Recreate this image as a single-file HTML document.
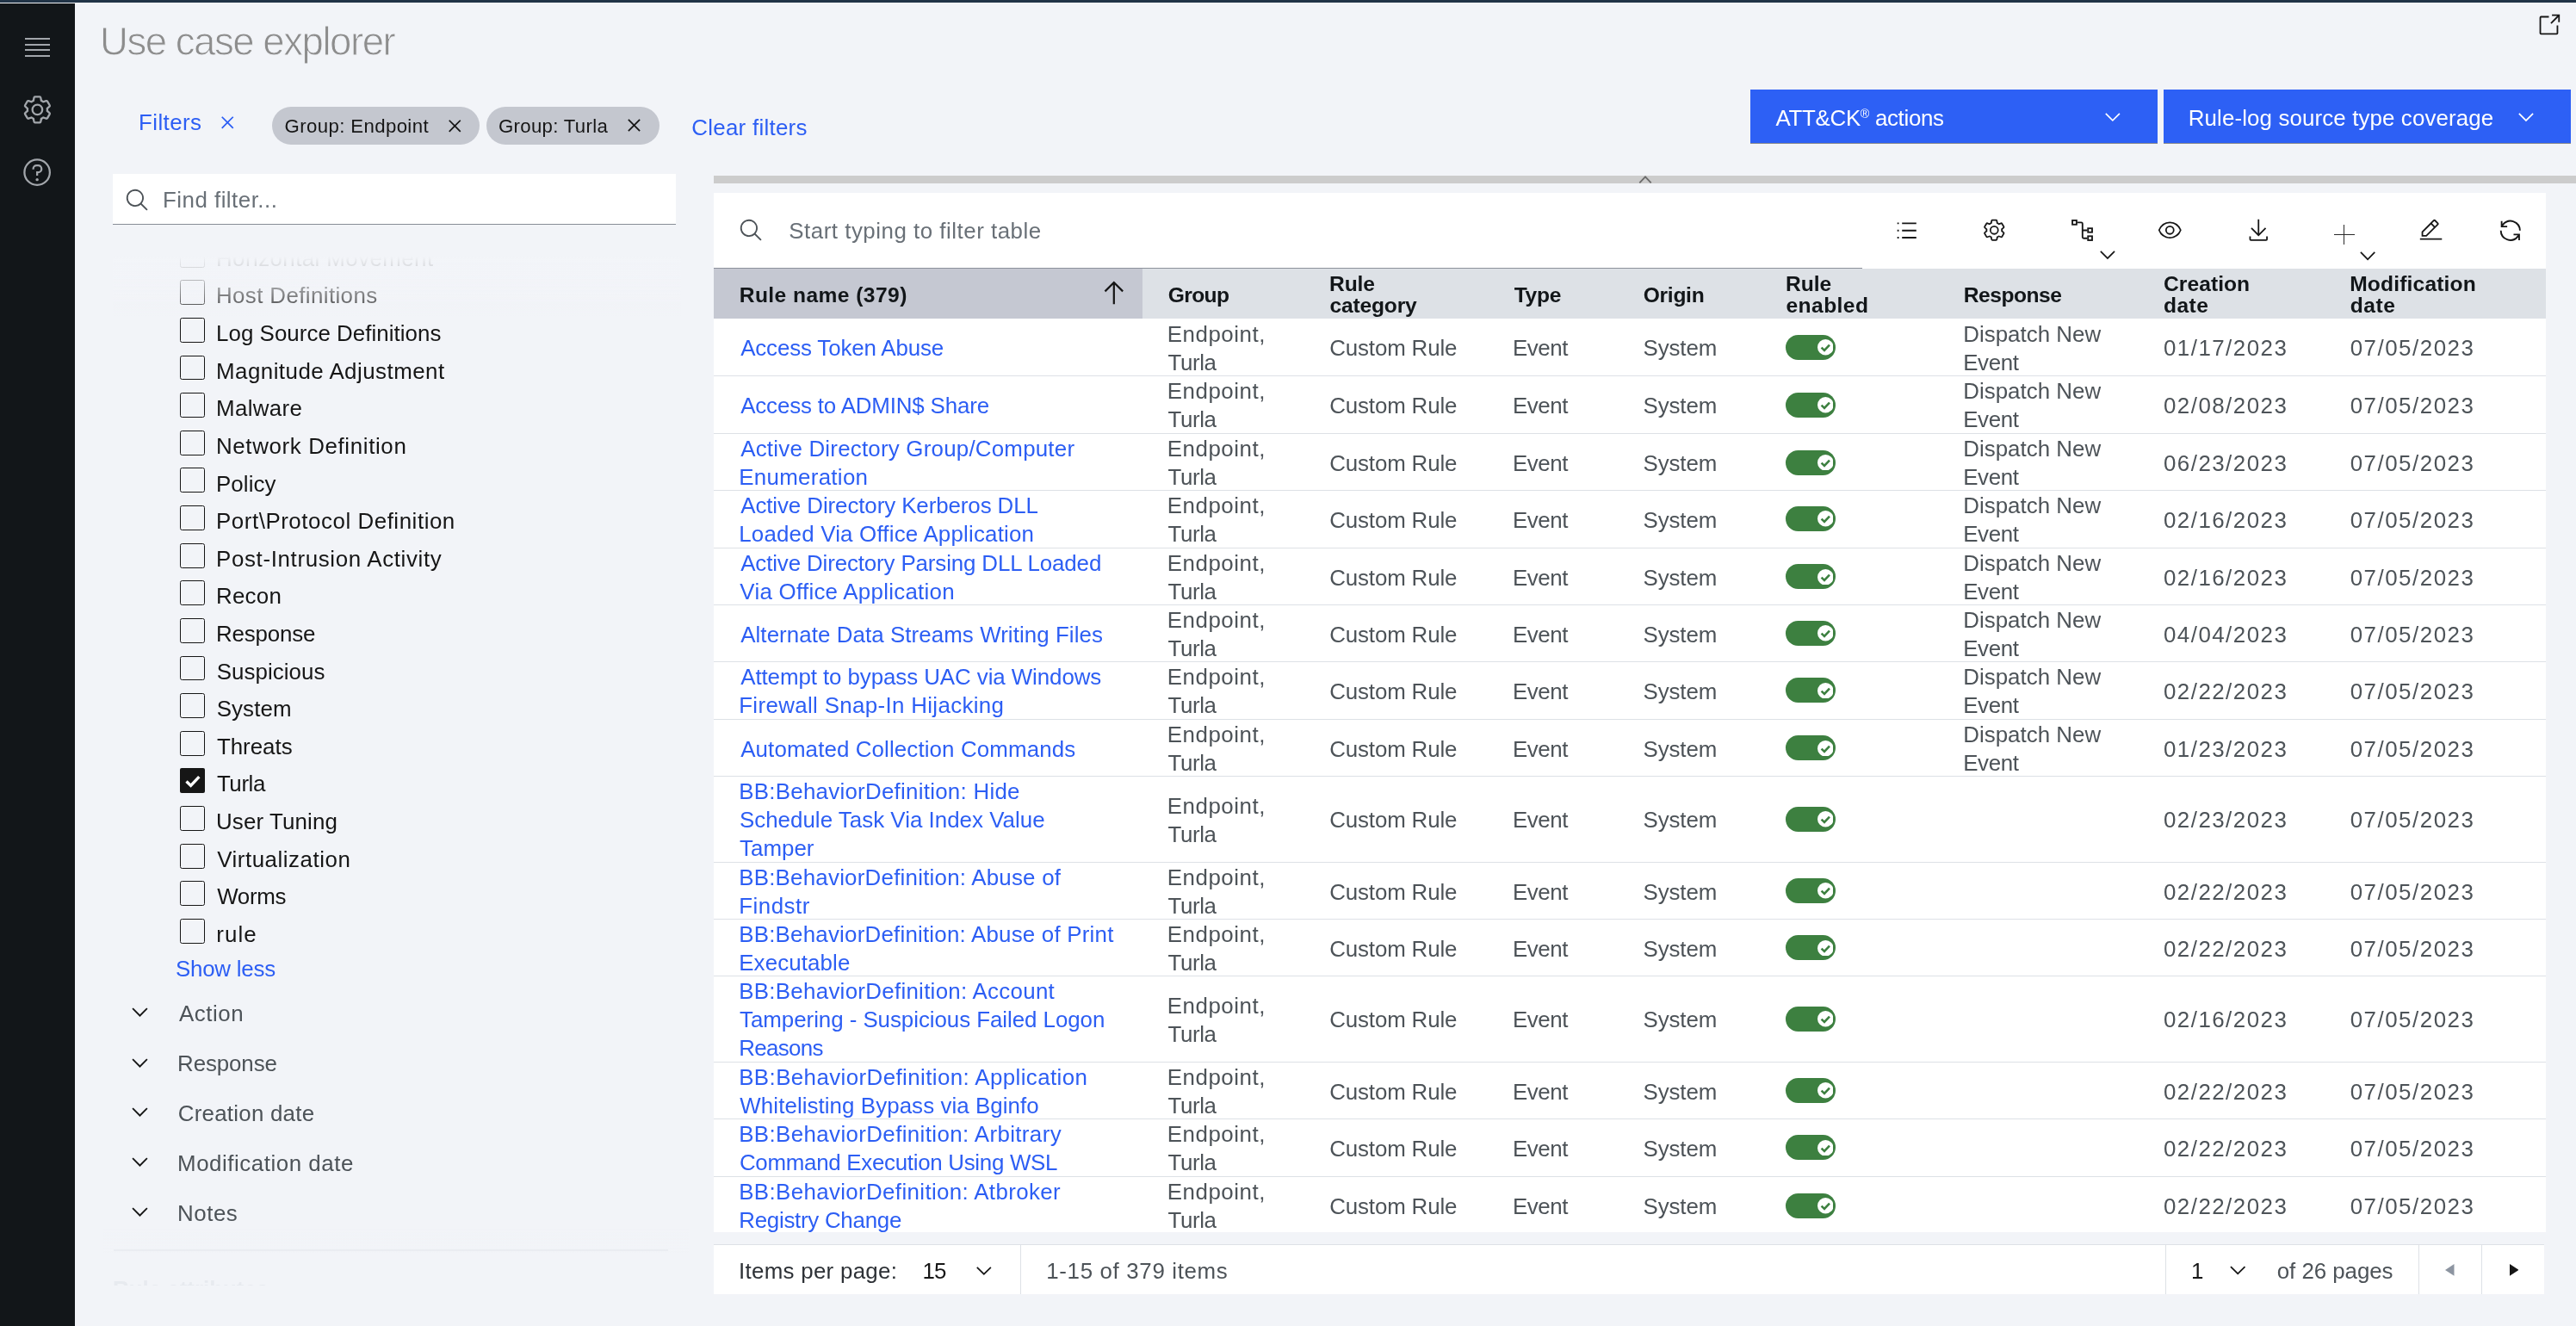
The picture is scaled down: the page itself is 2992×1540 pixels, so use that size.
<!DOCTYPE html>
<html lang="en"><head><meta charset="utf-8"><title>Use case explorer</title>
<style>
html,body{margin:0;padding:0}
body{width:2992px;height:1540px;overflow:hidden;background:#f2f4f8;font-family:"Liberation Sans", sans-serif;position:relative}
.b{position:absolute;display:block}
.t{position:absolute;white-space:nowrap;margin:0;padding:0}
.ln{display:inline-block}
@media (max-width:1600px){body{width:1496px;height:770px}#app{zoom:.5}}
</style></head><body><div id="app" style="position:absolute;left:0;top:0;width:2992px;height:1540px;will-change:transform">
<div class="b" style="left:0.00px;top:0.00px;width:2992.00px;height:3.00px;background:#213447;"></div>
<div class="b" style="left:0.00px;top:4.20px;width:86.80px;height:1540.00px;background:#121619;"></div>
<div class="b" style="left:28.80px;top:44.00px;width:29.30px;height:2.00px;background:#a2a6ab;"></div>
<div class="b" style="left:28.80px;top:50.60px;width:29.30px;height:2.00px;background:#a2a6ab;"></div>
<div class="b" style="left:28.80px;top:57.30px;width:29.30px;height:2.00px;background:#a2a6ab;"></div>
<div class="b" style="left:28.80px;top:64.00px;width:29.30px;height:2.00px;background:#a2a6ab;"></div>
<svg class="b" style="left:24.94px;top:108.79px;" width="36.81" height="36.81" viewBox="0 0 32 32" fill="#a2a6ab"><path d="M27,16.76c0-.25,0-.5,0-.76s0-.51,0-.77l1.92-1.68A2,2,0,0,0,29.3,11L26.94,7a2,2,0,0,0-1.73-1,2,2,0,0,0-.64.1l-2.43.82a11.35,11.35,0,0,0-1.31-.75l-.51-2.52a2,2,0,0,0-2-1.61H13.64a2,2,0,0,0-2,1.61l-.51,2.52a11.48,11.48,0,0,0-1.32.75L7.43,6.06A2,2,0,0,0,6.79,6,2,2,0,0,0,5.06,7L2.7,11a2,2,0,0,0,.41,2.51L5,15.24c0,.25,0,.5,0,.76s0,.51,0,.77L3.11,18.45A2,2,0,0,0,2.7,21L5.06,25a2,2,0,0,0,1.73,1,2,2,0,0,0,.64-.1l2.43-.82a11.35,11.35,0,0,0,1.31.75l.51,2.52a2,2,0,0,0,2,1.61h4.72a2,2,0,0,0,2-1.61l.51-2.52a11.48,11.48,0,0,0,1.32-.75l2.42.82a2,2,0,0,0,.64.1,2,2,0,0,0,1.73-1L29.3,21a2,2,0,0,0-.41-2.51ZM25.21,24l-3.43-1.16a8.86,8.86,0,0,1-2.71,1.57L18.36,28H13.64l-.71-3.55a9.36,9.36,0,0,1-2.7-1.57L6.79,24,4.43,20l2.72-2.4a8.9,8.9,0,0,1,0-3.13L4.43,12,6.79,8l3.43,1.16a8.86,8.86,0,0,1,2.71-1.57L13.64,4h4.72l.71,3.55a9.36,9.36,0,0,1,2.7,1.57L25.21,8,27.57,12l-2.72,2.4a8.9,8.9,0,0,1,0,3.13L27.57,20Z"/><path d="M16,22a6,6,0,1,1,6-6A5.94,5.94,0,0,1,16,22Zm0-10a3.91,3.91,0,0,0-4,4,3.91,3.91,0,0,0,4,4,3.91,3.91,0,0,0,4-4A3.91,3.91,0,0,0,16,12Z"/></svg>
<svg class="b" style="left:24.86px;top:181.61px;" width="36.29" height="36.29" viewBox="0 0 32 32" fill="#a2a6ab"><path d="M16,2A14,14,0,1,0,30,16,14,14,0,0,0,16,2Zm0,26A12,12,0,1,1,28,16,12,12,0,0,1,16,28Z"/><circle cx="16" cy="23.5" r="1.5"/><path d="M17,8H15.5A4.49,4.49,0,0,0,11,12.5V13h2v-.5A2.5,2.5,0,0,1,15.5,10H17a2.5,2.5,0,0,1,0,5H15v4.5h2V17a4.5,4.5,0,0,0,0-9Z"/></svg>
<div class="t title" style="left:120.00px;top:22.00px;font-size:45.6px;line-height:54.72px;color:#8d8d8d;-webkit-text-stroke:0.9px #f2f4f8;"><span class="ln title_0" style="letter-spacing:-1.484px;margin-left:-4.00px;">Use case explorer</span></div>
<svg class="b" style="left:2946.40px;top:15.16px;" width="28.98" height="28.98" viewBox="0 0 32 32" fill="#161616"><path d="M26,28H6a2.0027,2.0027,0,0,1-2-2V6A2.0027,2.0027,0,0,1,6,4H16V6H6V26H26V16h2V26A2.0027,2.0027,0,0,1,26,28Z"/><path d="M20 2L20 4 26.586 4 18 12.586 19.414 14 28 5.414 28 12 30 12 30 2 20 2z"/></svg>
<div class="t filters" style="left:163.00px;top:127.00px;font-size:25.9px;line-height:31.08px;color:#2c5ef4;"><span class="ln filters_0" style="letter-spacing:0.417px;margin-left:-2.00px;">Filters</span></div>
<svg class="b" style="left:250.00px;top:127.75px;" width="28.5" height="28.5" viewBox="0 0 32 32" fill="#2c5ef4"><path d="M24 9.4L22.6 8 16 14.6 9.4 8 8 9.4 14.6 16 8 22.6 9.4 24 16 17.4 22.6 24 24 22.6 17.4 16 24 9.4z"/></svg>
<div class="b" style="left:315.50px;top:123.60px;width:241.20px;height:44.10px;background:#c4c7cf;border-radius:22.1px;"></div>
<div class="t chip1" style="left:331.50px;top:134.00px;font-size:22.2px;line-height:26.64px;color:#161616;"><span class="ln chip1_0" style="letter-spacing:0.393px;margin-left:-1.00px;">Group: Endpoint</span></div>
<svg class="b" style="left:514.45px;top:131.50px;" width="28.5" height="28.5" viewBox="0 0 32 32" fill="#161616"><path d="M24 9.4L22.6 8 16 14.6 9.4 8 8 9.4 14.6 16 8 22.6 9.4 24 16 17.4 22.6 24 24 22.6 17.4 16 24 9.4z"/></svg>
<div class="b" style="left:564.70px;top:123.60px;width:201.30px;height:44.10px;background:#c4c7cf;border-radius:22.1px;"></div>
<div class="t chip2" style="left:580.00px;top:134.00px;font-size:22.2px;line-height:26.64px;color:#161616;"><span class="ln chip2_0" style="letter-spacing:0.318px;margin-left:-1.00px;">Group: Turla</span></div>
<svg class="b" style="left:722.25px;top:131.25px;" width="29.0" height="29.0" viewBox="0 0 32 32" fill="#161616"><path d="M24 9.4L22.6 8 16 14.6 9.4 8 8 9.4 14.6 16 8 22.6 9.4 24 16 17.4 22.6 24 24 22.6 17.4 16 24 9.4z"/></svg>
<div class="t clear" style="left:804.50px;top:133.00px;font-size:25.9px;line-height:31.08px;color:#2c5ef4;"><span class="ln clear_0" style="letter-spacing:0.271px;margin-left:-1.25px;">Clear filters</span></div>
<div class="b" style="left:2032.90px;top:104.10px;width:473.00px;height:61.90px;background:#2d60f5;"></div>
<div class="b" style="left:2032.90px;top:166.00px;width:473.00px;height:1.00px;background:#84868b;"></div>
<div class="b" style="left:2512.90px;top:104.10px;width:473.10px;height:61.90px;background:#2d60f5;"></div>
<div class="b" style="left:2512.90px;top:166.00px;width:473.10px;height:1.00px;background:#84868b;"></div>
<div class="t btn1" style="left:2062.60px;top:122.00px;font-size:25.9px;line-height:31.08px;color:#fff;"><span class="ln btn1_0" style="letter-spacing:-0.321px;margin-left:-0.05px;">ATT&amp;CK<span style="font-size:0.55em;position:relative;top:-0.62em;">®</span> actions</span></div>
<svg class="b" style="left:2439.63px;top:121.62px;" width="27.73" height="27.73" viewBox="0 0 32 32" fill="#fff"><path d="M16 22L6 12 7.4 10.6 16 19.2 24.6 10.6 26 12z"/></svg>
<div class="t btn2" style="left:2543.80px;top:122.00px;font-size:25.9px;line-height:31.08px;color:#fff;"><span class="ln btn2_0" style="letter-spacing:0.120px;margin-left:-2.10px;">Rule-log source type coverage</span></div>
<svg class="b" style="left:2920.47px;top:121.96px;" width="27.95" height="27.95" viewBox="0 0 32 32" fill="#fff"><path d="M16 22L6 12 7.4 10.6 16 19.2 24.6 10.6 26 12z"/></svg>
<div class="b" style="left:131.00px;top:201.80px;width:654.00px;height:58.20px;background:#fff;"></div>
<div class="b" style="left:131.00px;top:259.50px;width:654.00px;height:1.60px;background:#878d96;"></div>
<svg class="b" style="left:145.29px;top:217.54px;" width="29.33" height="29.33" viewBox="0 0 32 32" fill="#4d5358"><path d="M29,27.586l-7.552-7.552a11.018,11.018,0,1,0-1.414,1.414L27.586,29ZM4,13a9,9,0,1,1,9,9A9.01,9.01,0,0,1,4,13Z"/></svg>
<div class="t find" style="left:191.00px;top:217.00px;font-size:25.9px;line-height:31.08px;color:#697077;"><span class="ln find_0" style="letter-spacing:0.481px;margin-left:-2.00px;">Find filter...</span></div>
<div class="b" style="left:209.10px;top:281.74px;width:28.90px;height:28.90px;background:transparent;box-sizing:border-box;border:1.6px solid #161616;border-radius:2.5px;"></div>
<div class="t flt" style="left:253.10px;top:285.00px;font-size:25.9px;line-height:31.08px;color:#161616;"><span class="ln f0_0" style="letter-spacing:0.417px;margin-left:-2.10px;">Horizontal Movement</span></div>
<div class="b" style="left:209.10px;top:325.36px;width:28.90px;height:28.90px;background:transparent;box-sizing:border-box;border:1.6px solid #161616;border-radius:2.5px;"></div>
<div class="t flt" style="left:253.10px;top:328.00px;font-size:25.9px;line-height:31.08px;color:#161616;"><span class="ln f1_0" style="letter-spacing:0.387px;margin-left:-2.10px;">Host Definitions</span></div>
<div class="b" style="left:209.10px;top:368.98px;width:28.90px;height:28.90px;background:transparent;box-sizing:border-box;border:1.6px solid #161616;border-radius:2.5px;"></div>
<div class="t flt" style="left:253.10px;top:372.00px;font-size:25.9px;line-height:31.08px;color:#161616;"><span class="ln f2_0" style="letter-spacing:0.045px;margin-left:-2.10px;">Log Source Definitions</span></div>
<div class="b" style="left:209.10px;top:412.60px;width:28.90px;height:28.90px;background:transparent;box-sizing:border-box;border:1.6px solid #161616;border-radius:2.5px;"></div>
<div class="t flt" style="left:253.10px;top:416.00px;font-size:25.9px;line-height:31.08px;color:#161616;"><span class="ln f3_0" style="letter-spacing:0.471px;margin-left:-2.10px;">Magnitude Adjustment</span></div>
<div class="b" style="left:209.10px;top:456.22px;width:28.90px;height:28.90px;background:transparent;box-sizing:border-box;border:1.6px solid #161616;border-radius:2.5px;"></div>
<div class="t flt" style="left:253.10px;top:459.00px;font-size:25.9px;line-height:31.08px;color:#161616;"><span class="ln f4_0" style="letter-spacing:0.342px;margin-left:-2.10px;">Malware</span></div>
<div class="b" style="left:209.10px;top:499.84px;width:28.90px;height:28.90px;background:transparent;box-sizing:border-box;border:1.6px solid #161616;border-radius:2.5px;"></div>
<div class="t flt" style="left:253.10px;top:503.00px;font-size:25.9px;line-height:31.08px;color:#161616;"><span class="ln f5_0" style="letter-spacing:0.629px;margin-left:-2.10px;">Network Definition</span></div>
<div class="b" style="left:209.10px;top:543.46px;width:28.90px;height:28.90px;background:transparent;box-sizing:border-box;border:1.6px solid #161616;border-radius:2.5px;"></div>
<div class="t flt" style="left:253.10px;top:547.00px;font-size:25.9px;line-height:31.08px;color:#161616;"><span class="ln f6_0" style="letter-spacing:0.070px;margin-left:-2.10px;">Policy</span></div>
<div class="b" style="left:209.10px;top:587.08px;width:28.90px;height:28.90px;background:transparent;box-sizing:border-box;border:1.6px solid #161616;border-radius:2.5px;"></div>
<div class="t flt" style="left:253.10px;top:590.00px;font-size:25.9px;line-height:31.08px;color:#161616;"><span class="ln f7_0" style="letter-spacing:0.543px;margin-left:-2.10px;">Port\Protocol Definition</span></div>
<div class="b" style="left:209.10px;top:630.70px;width:28.90px;height:28.90px;background:transparent;box-sizing:border-box;border:1.6px solid #161616;border-radius:2.5px;"></div>
<div class="t flt" style="left:253.10px;top:634.00px;font-size:25.9px;line-height:31.08px;color:#161616;"><span class="ln f8_0" style="letter-spacing:0.648px;margin-left:-2.10px;">Post-Intrusion Activity</span></div>
<div class="b" style="left:209.10px;top:674.32px;width:28.90px;height:28.90px;background:transparent;box-sizing:border-box;border:1.6px solid #161616;border-radius:2.5px;"></div>
<div class="t flt" style="left:253.10px;top:677.00px;font-size:25.9px;line-height:31.08px;color:#161616;"><span class="ln f9_0" style="letter-spacing:0.250px;margin-left:-2.10px;">Recon</span></div>
<div class="b" style="left:209.10px;top:717.94px;width:28.90px;height:28.90px;background:transparent;box-sizing:border-box;border:1.6px solid #161616;border-radius:2.5px;"></div>
<div class="t flt" style="left:253.10px;top:721.00px;font-size:25.9px;line-height:31.08px;color:#161616;"><span class="ln f10_0" style="letter-spacing:-0.171px;margin-left:-2.10px;">Response</span></div>
<div class="b" style="left:209.10px;top:761.56px;width:28.90px;height:28.90px;background:transparent;box-sizing:border-box;border:1.6px solid #161616;border-radius:2.5px;"></div>
<div class="t flt" style="left:253.10px;top:765.00px;font-size:25.9px;line-height:31.08px;color:#161616;"><span class="ln f11_0" style="letter-spacing:0.050px;margin-left:-1.35px;">Suspicious</span></div>
<div class="b" style="left:209.10px;top:805.18px;width:28.90px;height:28.90px;background:transparent;box-sizing:border-box;border:1.6px solid #161616;border-radius:2.5px;"></div>
<div class="t flt" style="left:253.10px;top:808.00px;font-size:25.9px;line-height:31.08px;color:#161616;"><span class="ln f12_0" style="letter-spacing:0.080px;margin-left:-1.35px;">System</span></div>
<div class="b" style="left:209.10px;top:848.80px;width:28.90px;height:28.90px;background:transparent;box-sizing:border-box;border:1.6px solid #161616;border-radius:2.5px;"></div>
<div class="t flt" style="left:253.10px;top:852.00px;font-size:25.9px;line-height:31.08px;color:#161616;"><span class="ln f13_0" style="letter-spacing:-0.008px;margin-left:-1.20px;">Threats</span></div>
<div class="b" style="left:209.10px;top:892.42px;width:28.90px;height:28.90px;background:#161616;border-radius:2px;"></div>
<svg class="b" style="left:214.50px;top:899.62px" width="18" height="15" viewBox="0 0 18 15" fill="none" stroke="#fff" stroke-width="3.4"><path d="M1.5 7.5L6.6 12.4L16.3 2.2"/></svg>
<div class="t flt" style="left:253.10px;top:895.00px;font-size:25.9px;line-height:31.08px;color:#161616;"><span class="ln f14_0" style="letter-spacing:-0.388px;margin-left:-1.20px;">Turla</span></div>
<div class="b" style="left:209.10px;top:936.04px;width:28.90px;height:28.90px;background:transparent;box-sizing:border-box;border:1.6px solid #161616;border-radius:2.5px;"></div>
<div class="t flt" style="left:253.10px;top:939.00px;font-size:25.9px;line-height:31.08px;color:#161616;"><span class="ln f15_0" style="letter-spacing:0.125px;margin-left:-2.10px;">User Tuning</span></div>
<div class="b" style="left:209.10px;top:979.66px;width:28.90px;height:28.90px;background:transparent;box-sizing:border-box;border:1.6px solid #161616;border-radius:2.5px;"></div>
<div class="t flt" style="left:253.10px;top:983.00px;font-size:25.9px;line-height:31.08px;color:#161616;"><span class="ln f16_0" style="letter-spacing:0.531px;margin-left:-0.95px;">Virtualization</span></div>
<div class="b" style="left:209.10px;top:1023.28px;width:28.90px;height:28.90px;background:transparent;box-sizing:border-box;border:1.6px solid #161616;border-radius:2.5px;"></div>
<div class="t flt" style="left:253.10px;top:1026.00px;font-size:25.9px;line-height:31.08px;color:#161616;"><span class="ln f17_0" style="letter-spacing:-0.275px;margin-left:-0.95px;">Worms</span></div>
<div class="b" style="left:209.10px;top:1066.90px;width:28.90px;height:28.90px;background:transparent;box-sizing:border-box;border:1.6px solid #161616;border-radius:2.5px;"></div>
<div class="t flt" style="left:253.10px;top:1070.00px;font-size:25.9px;line-height:31.08px;color:#161616;"><span class="ln f18_0" style="letter-spacing:1.067px;margin-left:-1.85px;">rule</span></div>
<div class="b" style="left:131.00px;top:261.20px;width:660.00px;height:36.80px;background:#f2f4f8;"></div>
<div class="b" style="left:131.00px;top:298.00px;width:660.00px;height:72.00px;background:transparent;background:linear-gradient(to bottom,#f2f4f8 0%,rgba(242,244,248,0.72) 40%,rgba(242,244,248,0.35) 75%,rgba(242,244,248,0) 100%);"></div>
<div class="t showless" style="left:205.30px;top:1110.00px;font-size:25.9px;line-height:31.08px;color:#2c5ef4;"><span class="ln showless_0" style="letter-spacing:-0.219px;margin-left:-1.35px;">Show less</span></div>
<svg class="b" style="left:148.12px;top:1161.15px;" width="28.96" height="28.96" viewBox="0 0 32 32" fill="#161616"><path d="M16 22L6 12 7.4 10.6 16 19.2 24.6 10.6 26 12z"/></svg>
<div class="t acc" style="left:208.20px;top:1162.00px;font-size:25.9px;line-height:31.08px;color:#4d5358;"><span class="ln a0_0" style="letter-spacing:0.520px;margin-left:-0.15px;">Action</span></div>
<svg class="b" style="left:148.12px;top:1219.55px;" width="28.96" height="28.96" viewBox="0 0 32 32" fill="#161616"><path d="M16 22L6 12 7.4 10.6 16 19.2 24.6 10.6 26 12z"/></svg>
<div class="t acc" style="left:208.20px;top:1220.00px;font-size:25.9px;line-height:31.08px;color:#4d5358;"><span class="ln a1_0" style="letter-spacing:-0.107px;margin-left:-2.15px;">Response</span></div>
<svg class="b" style="left:148.12px;top:1277.35px;" width="28.96" height="28.96" viewBox="0 0 32 32" fill="#161616"><path d="M16 22L6 12 7.4 10.6 16 19.2 24.6 10.6 26 12z"/></svg>
<div class="t acc" style="left:208.20px;top:1278.00px;font-size:25.9px;line-height:31.08px;color:#4d5358;"><span class="ln a2_0" style="letter-spacing:0.237px;margin-left:-1.40px;">Creation date</span></div>
<svg class="b" style="left:148.12px;top:1335.35px;" width="28.96" height="28.96" viewBox="0 0 32 32" fill="#161616"><path d="M16 22L6 12 7.4 10.6 16 19.2 24.6 10.6 26 12z"/></svg>
<div class="t acc" style="left:208.20px;top:1336.00px;font-size:25.9px;line-height:31.08px;color:#4d5358;"><span class="ln a3_0" style="letter-spacing:0.531px;margin-left:-2.15px;">Modification date</span></div>
<svg class="b" style="left:148.12px;top:1393.15px;" width="28.96" height="28.96" viewBox="0 0 32 32" fill="#161616"><path d="M16 22L6 12 7.4 10.6 16 19.2 24.6 10.6 26 12z"/></svg>
<div class="t acc" style="left:208.20px;top:1394.00px;font-size:25.9px;line-height:31.08px;color:#4d5358;"><span class="ln a4_0" style="letter-spacing:0.525px;margin-left:-2.15px;">Notes</span></div>
<div class="b" style="left:131.50px;top:1451.40px;width:644.00px;height:1.40px;background:#e3e6ec;"></div>
<div class="b" style="left:131px;top:1470px;width:400px;height:23.4px;overflow:hidden;"><div class="t" style="left:0;top:12.3px;font-size:25.9px;line-height:31px;font-weight:700;color:#e7eaef;">Rule attributes</div></div>
<div class="b" style="left:120.00px;top:1425.00px;width:680.00px;height:30.00px;background:transparent;background:linear-gradient(to bottom,rgba(242,244,248,0),rgba(242,244,248,0.5));"></div>
<div class="b" style="left:829.00px;top:203.90px;width:2163.00px;height:8.90px;background:#cccccc;"></div>
<svg class="b" style="left:1900px;top:203.9px" width="22" height="8.9" viewBox="1900 203.9 22 8.9" fill="none" stroke="#6b6b6b" stroke-width="1.8"><path d="M1904.3 212.3L1911 205.2L1917.7 212.3"/></svg>
<div class="b" style="left:829.00px;top:224.00px;width:2127.80px;height:1206.80px;background:#fff;"></div>
<svg class="b" style="left:857.79px;top:253.04px;" width="29.33" height="29.33" viewBox="0 0 32 32" fill="#4d5358"><path d="M29,27.586l-7.552-7.552a11.018,11.018,0,1,0-1.414,1.414L27.586,29ZM4,13a9,9,0,1,1,9,9A9.01,9.01,0,0,1,4,13Z"/></svg>
<div class="t tsearch" style="left:917.50px;top:253.00px;font-size:25.9px;line-height:31.08px;color:#697077;"><span class="ln tsearch_0" style="letter-spacing:0.509px;margin-left:-1.25px;">Start typing to filter table</span></div>
<div class="b" style="left:829.00px;top:310.60px;width:1334.00px;height:1.50px;background:#8d919b;"></div>
<svg class="b" style="left:2200.27px;top:252.52px;" width="29.47" height="29.47" viewBox="0 0 32 32" fill="#161616"><path d="M10 6H28V8H10zM10 24H28V26H10zM10 15H28V17H10zM4 15H6V17H4zM4 6H6V8H4zM4 24H6V26H4z"/></svg>
<svg class="b" style="left:2301.60px;top:252.72px;" width="28.55" height="28.55" viewBox="0 0 32 32" fill="#161616"><path d="M27,16.76c0-.25,0-.5,0-.76s0-.51,0-.77l1.92-1.68A2,2,0,0,0,29.3,11L26.94,7a2,2,0,0,0-1.73-1,2,2,0,0,0-.64.1l-2.43.82a11.35,11.35,0,0,0-1.31-.75l-.51-2.52a2,2,0,0,0-2-1.61H13.64a2,2,0,0,0-2,1.61l-.51,2.52a11.48,11.48,0,0,0-1.32.75L7.43,6.06A2,2,0,0,0,6.79,6,2,2,0,0,0,5.06,7L2.7,11a2,2,0,0,0,.41,2.51L5,15.24c0,.25,0,.5,0,.76s0,.51,0,.77L3.11,18.45A2,2,0,0,0,2.7,21L5.06,25a2,2,0,0,0,1.73,1,2,2,0,0,0,.64-.1l2.43-.82a11.35,11.35,0,0,0,1.31.75l.51,2.52a2,2,0,0,0,2,1.61h4.72a2,2,0,0,0,2-1.61l.51-2.52a11.48,11.48,0,0,0,1.32-.75l2.42.82a2,2,0,0,0,.64.1,2,2,0,0,0,1.73-1L29.3,21a2,2,0,0,0-.41-2.51ZM25.21,24l-3.43-1.16a8.86,8.86,0,0,1-2.71,1.57L18.36,28H13.64l-.71-3.55a9.36,9.36,0,0,1-2.7-1.57L6.79,24,4.43,20l2.72-2.4a8.9,8.9,0,0,1,0-3.13L4.43,12,6.79,8l3.43,1.16a8.86,8.86,0,0,1,2.71-1.57L13.64,4h4.72l.71,3.55a9.36,9.36,0,0,1,2.7,1.57L25.21,8,27.57,12l-2.72,2.4a8.9,8.9,0,0,1,0,3.13L27.57,20Z"/><path d="M16,22a6,6,0,1,1,6-6A5.94,5.94,0,0,1,16,22Zm0-10a3.91,3.91,0,0,0-4,4,3.91,3.91,0,0,0,4,4,3.91,3.91,0,0,0,4-4A3.91,3.91,0,0,0,16,12Z"/></svg>
<svg class="b" style="left:2400px;top:250px" width="36" height="34" viewBox="2400 250 36 34" fill="none" stroke="#161616" stroke-width="1.85"><rect x="2407.05" y="255.95" width="4.85" height="4.8"/><path d="M2412.8 258.3H2417.3Q2418.8 258.3 2418.8 259.8V275.2Q2418.8 276.7 2420.3 276.7H2424.3M2418.8 267.5H2424.3"/><rect x="2425.2" y="265.2" width="4.8" height="4.5"/><rect x="2425.2" y="274.3" width="4.8" height="4.7"/></svg>
<svg class="b" style="left:2433.60px;top:281.54px;" width="27.89" height="27.89" viewBox="0 0 32 32" fill="#161616"><path d="M16 22L6 12 7.4 10.6 16 19.2 24.6 10.6 26 12z"/></svg>
<svg class="b" style="left:2506.21px;top:252.96px;" width="28.58" height="28.58" viewBox="0 0 32 32" fill="#161616"><path d="M30.94,15.66A16.69,16.69,0,0,0,16,5,16.69,16.69,0,0,0,1.06,15.66a1,1,0,0,0,0,.68A16.69,16.69,0,0,0,16,27,16.69,16.69,0,0,0,30.94,16.34,1,1,0,0,0,30.94,15.66ZM16,25c-5.3,0-10.9-3.93-12.93-9C5.1,10.93,10.7,7,16,7s10.9,3.93,12.93,9C26.9,21.07,21.3,25,16,25Z"/><path d="M16,10a6,6,0,1,0,6,6A6,6,0,0,0,16,10Zm0,10a4,4,0,1,1,4-4A4,4,0,0,1,16,20Z"/></svg>
<svg class="b" style="left:2608.50px;top:253.15px;" width="28.5" height="28.5" viewBox="0 0 32 32" fill="#161616"><path d="M26,24v4H6V24H4v4H4a2,2,0,0,0,2,2H26a2,2,0,0,0,2-2h0V24Z"/><path d="M26 14L24.59 12.59 17 20.17 17 2 15 2 15 20.17 7.41 12.59 6 14 16 24 26 14z"/></svg>
<div class="b" style="left:2711.00px;top:271.70px;width:23.80px;height:1.15px;background:#2a2a2a;"></div>
<div class="b" style="left:2722.30px;top:261.00px;width:1.15px;height:23.00px;background:#2a2a2a;"></div>
<svg class="b" style="left:2735.55px;top:282.94px;" width="28.2" height="28.2" viewBox="0 0 32 32" fill="#161616"><path d="M16 22L6 12 7.4 10.6 16 19.2 24.6 10.6 26 12z"/></svg>
<svg class="b" style="left:2808.80px;top:253.26px;" width="29.1" height="29.1" viewBox="0 0 32 32" fill="#161616"><path d="M2 26H30V28H2zM25.4 9c.8-.8.8-2 0-2.8 0 0 0 0 0 0l-3.6-3.6c-.8-.8-2-.8-2.8 0 0 0 0 0 0 0l-15 15V24h6.4L25.4 9zM20.4 4L24 7.6l-3 3L17.4 7 20.4 4zM6 22v-3.6l10-10 3.6 3.6-10 10H6z"/></svg>
<svg class="b" style="left:2900.60px;top:252.95px;" width="29.6" height="29.6" viewBox="0 0 32 32" fill="#161616"><path d="M12 10H6.78A11 11 0 0127 16h2A13 13 0 006 7.68V4H4v8h8zM20 22h5.22A11 11 0 015 16H3a13 13 0 0023 8.32V28h2V20H20z"/></svg>
<div class="b" style="left:829.00px;top:312.10px;width:2127.80px;height:57.80px;background:#dde1e6;"></div>
<div class="b" style="left:829.00px;top:312.10px;width:498.00px;height:57.80px;background:#c5c8d2;"></div>
<div class="t h" style="left:860.30px;top:328.00px;font-size:24.6px;line-height:29.52px;color:#121619;font-weight:700;"><span class="ln h0_0" style="letter-spacing:0.429px;margin-left:-1.60px;">Rule name (379)</span></div>
<svg class="b" style="left:1276.23px;top:322.43px;" width="35.64" height="35.64" viewBox="0 0 32 32" fill="#161616"><path d="M16 4L6 14 7.41 15.4 15 7.83 15 28 17 28 17 7.83 24.59 15.4 26 14 16 4z"/></svg>
<div class="t h" style="left:1357.75px;top:328.00px;font-size:24.6px;line-height:29.52px;color:#121619;font-weight:700;"><span class="ln h1_0" style="letter-spacing:-0.625px;margin-left:-1.00px;">Group</span></div>
<div class="t h" style="left:1545.50px;top:317.00px;font-size:24.6px;line-height:25px;color:#121619;font-weight:700;"><span class="ln h2_0" style="letter-spacing:-0.083px;margin-left:-1.50px;">Rule</span><br><span class="ln h2_1" style="letter-spacing:-0.179px;margin-left:-1.00px;">category</span></div>
<div class="t h" style="left:1759.00px;top:328.00px;font-size:24.6px;line-height:29.52px;color:#121619;font-weight:700;"><span class="ln h3_0" style="letter-spacing:-0.333px;margin-left:-0.25px;">Type</span></div>
<div class="t h" style="left:1909.75px;top:328.00px;font-size:24.6px;line-height:29.52px;color:#121619;font-weight:700;"><span class="ln h4_0" style="letter-spacing:-0.300px;margin-left:-1.00px;">Origin</span></div>
<div class="t h" style="left:2075.50px;top:317.00px;font-size:24.6px;line-height:25px;color:#121619;font-weight:700;"><span class="ln h5_0" style="margin-left:-1.50px;">Rule</span><br><span class="ln h5_1" style="letter-spacing:0.417px;margin-left:-1.00px;">enabled</span></div>
<div class="t h" style="left:2282.30px;top:328.00px;font-size:24.6px;line-height:29.52px;color:#121619;font-weight:700;"><span class="ln h6_0" style="letter-spacing:-0.464px;margin-left:-1.60px;">Response</span></div>
<div class="t h" style="left:2514.00px;top:317.00px;font-size:24.6px;line-height:25px;color:#121619;font-weight:700;"><span class="ln h7_0" style="letter-spacing:0.050px;margin-left:-1.00px;">Creation</span><br><span class="ln h7_1" style="letter-spacing:0.450px;margin-left:-1.00px;">date</span></div>
<div class="t h" style="left:2730.80px;top:317.00px;font-size:24.6px;line-height:25px;color:#121619;font-weight:700;"><span class="ln h8_0" style="letter-spacing:0.159px;margin-left:-1.60px;">Modification</span><br><span class="ln h8_1" style="letter-spacing:0.533px;margin-left:-1.10px;">date</span></div>
<div class="t link" style="left:860.30px;top:388.00px;font-size:25.9px;line-height:32.8px;color:#2c5ef4;"><span class="ln r0_0" style="letter-spacing:-0.147px;margin-left:-0.10px;">Access Token Abuse</span></div>
<div class="t cell" style="left:1357.75px;top:372.00px;font-size:25.9px;line-height:32.8px;color:#4d5358;"><span class="ln g0_0" style="letter-spacing:0.531px;margin-left:-2.00px;">Endpoint,</span><br><span class="ln g0_1" style="letter-spacing:-0.375px;margin-left:-1.35px;">Turla</span></div>
<div class="t cell" style="left:1545.50px;top:388.00px;font-size:25.9px;line-height:32.8px;color:#4d5358;"><span class="ln c0_0" style="letter-spacing:-0.150px;margin-left:-1.25px;">Custom Rule</span></div>
<div class="t cell" style="left:1759.00px;top:388.00px;font-size:25.9px;line-height:32.8px;color:#4d5358;"><span class="ln ty0_0" style="letter-spacing:-0.438px;margin-left:-2.00px;">Event</span></div>
<div class="t cell" style="left:1909.75px;top:388.00px;font-size:25.9px;line-height:32.8px;color:#4d5358;"><span class="ln o0_0" style="letter-spacing:-0.100px;margin-left:-1.25px;">System</span></div>
<div class="b" style="left:2074.00px;top:388.80px;width:58.00px;height:29.00px;background:#3d8040;border-radius:15px;"></div>
<svg class="b" style="left:2110.70px;top:394.10px" width="18.6" height="18.6" viewBox="0 0 18.6 18.6"><circle cx="9.3" cy="9.3" r="9.3" fill="#fff"/><path d="M4.6 9.6L8 12.9L14 6.6" fill="none" stroke="#3d8040" stroke-width="2.6"/></svg>
<div class="t cell" style="left:2282.30px;top:372.00px;font-size:25.9px;line-height:32.8px;color:#4d5358;"><span class="ln rs0_0" style="letter-spacing:0.023px;margin-left:-2.10px;">Dispatch New</span><br><span class="ln rs0_1" style="letter-spacing:-0.388px;margin-left:-2.10px;">Event</span></div>
<div class="t date" style="left:2514.00px;top:388.00px;font-size:25.9px;line-height:32.8px;color:#4d5358;"><span class="ln d0_0" style="letter-spacing:1.467px;margin-left:-1.00px;">01/17/2023</span></div>
<div class="t date" style="left:2730.80px;top:388.00px;font-size:25.9px;line-height:32.8px;color:#4d5358;"><span class="ln m0_0" style="letter-spacing:1.506px;margin-left:-1.10px;">07/05/2023</span></div>
<div class="b" style="left:829.00px;top:436.00px;width:2127.80px;height:1.20px;background:#dde1e6;"></div>
<div class="t link" style="left:860.30px;top:455.00px;font-size:25.9px;line-height:32.8px;color:#2c5ef4;"><span class="ln r1_0" style="letter-spacing:-0.155px;margin-left:-0.10px;">Access to ADMIN$ Share</span></div>
<div class="t cell" style="left:1357.75px;top:438.00px;font-size:25.9px;line-height:32.8px;color:#4d5358;"><span class="ln g1_0" style="letter-spacing:0.531px;margin-left:-2.00px;">Endpoint,</span><br><span class="ln g1_1" style="letter-spacing:-0.375px;margin-left:-1.35px;">Turla</span></div>
<div class="t cell" style="left:1545.50px;top:455.00px;font-size:25.9px;line-height:32.8px;color:#4d5358;"><span class="ln c1_0" style="letter-spacing:-0.150px;margin-left:-1.25px;">Custom Rule</span></div>
<div class="t cell" style="left:1759.00px;top:455.00px;font-size:25.9px;line-height:32.8px;color:#4d5358;"><span class="ln ty1_0" style="letter-spacing:-0.438px;margin-left:-2.00px;">Event</span></div>
<div class="t cell" style="left:1909.75px;top:455.00px;font-size:25.9px;line-height:32.8px;color:#4d5358;"><span class="ln o1_0" style="letter-spacing:-0.100px;margin-left:-1.25px;">System</span></div>
<div class="b" style="left:2074.00px;top:455.65px;width:58.00px;height:29.00px;background:#3d8040;border-radius:15px;"></div>
<svg class="b" style="left:2110.70px;top:460.95px" width="18.6" height="18.6" viewBox="0 0 18.6 18.6"><circle cx="9.3" cy="9.3" r="9.3" fill="#fff"/><path d="M4.6 9.6L8 12.9L14 6.6" fill="none" stroke="#3d8040" stroke-width="2.6"/></svg>
<div class="t cell" style="left:2282.30px;top:438.00px;font-size:25.9px;line-height:32.8px;color:#4d5358;"><span class="ln rs1_0" style="letter-spacing:0.023px;margin-left:-2.10px;">Dispatch New</span><br><span class="ln rs1_1" style="letter-spacing:-0.388px;margin-left:-2.10px;">Event</span></div>
<div class="t date" style="left:2514.00px;top:455.00px;font-size:25.9px;line-height:32.8px;color:#4d5358;"><span class="ln d1_0" style="letter-spacing:1.467px;margin-left:-1.00px;">02/08/2023</span></div>
<div class="t date" style="left:2730.80px;top:455.00px;font-size:25.9px;line-height:32.8px;color:#4d5358;"><span class="ln m1_0" style="letter-spacing:1.506px;margin-left:-1.10px;">07/05/2023</span></div>
<div class="b" style="left:829.00px;top:503.00px;width:2127.80px;height:1.20px;background:#dde1e6;"></div>
<div class="t link" style="left:860.30px;top:505.00px;font-size:25.9px;line-height:32.8px;color:#2c5ef4;"><span class="ln r2_0" style="letter-spacing:0.217px;margin-left:-0.10px;">Active Directory Group/Computer</span><br><span class="ln r2_1" style="letter-spacing:0.300px;margin-left:-2.10px;">Enumeration</span></div>
<div class="t cell" style="left:1357.75px;top:505.00px;font-size:25.9px;line-height:32.8px;color:#4d5358;"><span class="ln g2_0" style="letter-spacing:0.531px;margin-left:-2.00px;">Endpoint,</span><br><span class="ln g2_1" style="letter-spacing:-0.375px;margin-left:-1.35px;">Turla</span></div>
<div class="t cell" style="left:1545.50px;top:522.00px;font-size:25.9px;line-height:32.8px;color:#4d5358;"><span class="ln c2_0" style="letter-spacing:-0.150px;margin-left:-1.25px;">Custom Rule</span></div>
<div class="t cell" style="left:1759.00px;top:522.00px;font-size:25.9px;line-height:32.8px;color:#4d5358;"><span class="ln ty2_0" style="letter-spacing:-0.438px;margin-left:-2.00px;">Event</span></div>
<div class="t cell" style="left:1909.75px;top:522.00px;font-size:25.9px;line-height:32.8px;color:#4d5358;"><span class="ln o2_0" style="letter-spacing:-0.100px;margin-left:-1.25px;">System</span></div>
<div class="b" style="left:2074.00px;top:522.55px;width:58.00px;height:29.00px;background:#3d8040;border-radius:15px;"></div>
<svg class="b" style="left:2110.70px;top:527.85px" width="18.6" height="18.6" viewBox="0 0 18.6 18.6"><circle cx="9.3" cy="9.3" r="9.3" fill="#fff"/><path d="M4.6 9.6L8 12.9L14 6.6" fill="none" stroke="#3d8040" stroke-width="2.6"/></svg>
<div class="t cell" style="left:2282.30px;top:505.00px;font-size:25.9px;line-height:32.8px;color:#4d5358;"><span class="ln rs2_0" style="letter-spacing:0.023px;margin-left:-2.10px;">Dispatch New</span><br><span class="ln rs2_1" style="letter-spacing:-0.388px;margin-left:-2.10px;">Event</span></div>
<div class="t date" style="left:2514.00px;top:522.00px;font-size:25.9px;line-height:32.8px;color:#4d5358;"><span class="ln d2_0" style="letter-spacing:1.467px;margin-left:-1.00px;">06/23/2023</span></div>
<div class="t date" style="left:2730.80px;top:522.00px;font-size:25.9px;line-height:32.8px;color:#4d5358;"><span class="ln m2_0" style="letter-spacing:1.506px;margin-left:-1.10px;">07/05/2023</span></div>
<div class="b" style="left:829.00px;top:569.00px;width:2127.80px;height:1.20px;background:#dde1e6;"></div>
<div class="t link" style="left:860.30px;top:571.00px;font-size:25.9px;line-height:32.8px;color:#2c5ef4;"><span class="ln r3_0" style="letter-spacing:-0.089px;margin-left:-0.10px;">Active Directory Kerberos DLL</span><br><span class="ln r3_1" style="letter-spacing:0.196px;margin-left:-2.10px;">Loaded Via Office Application</span></div>
<div class="t cell" style="left:1357.75px;top:571.00px;font-size:25.9px;line-height:32.8px;color:#4d5358;"><span class="ln g3_0" style="letter-spacing:0.531px;margin-left:-2.00px;">Endpoint,</span><br><span class="ln g3_1" style="letter-spacing:-0.375px;margin-left:-1.35px;">Turla</span></div>
<div class="t cell" style="left:1545.50px;top:588.00px;font-size:25.9px;line-height:32.8px;color:#4d5358;"><span class="ln c3_0" style="letter-spacing:-0.150px;margin-left:-1.25px;">Custom Rule</span></div>
<div class="t cell" style="left:1759.00px;top:588.00px;font-size:25.9px;line-height:32.8px;color:#4d5358;"><span class="ln ty3_0" style="letter-spacing:-0.438px;margin-left:-2.00px;">Event</span></div>
<div class="t cell" style="left:1909.75px;top:588.00px;font-size:25.9px;line-height:32.8px;color:#4d5358;"><span class="ln o3_0" style="letter-spacing:-0.100px;margin-left:-1.25px;">System</span></div>
<div class="b" style="left:2074.00px;top:588.15px;width:58.00px;height:29.00px;background:#3d8040;border-radius:15px;"></div>
<svg class="b" style="left:2110.70px;top:593.45px" width="18.6" height="18.6" viewBox="0 0 18.6 18.6"><circle cx="9.3" cy="9.3" r="9.3" fill="#fff"/><path d="M4.6 9.6L8 12.9L14 6.6" fill="none" stroke="#3d8040" stroke-width="2.6"/></svg>
<div class="t cell" style="left:2282.30px;top:571.00px;font-size:25.9px;line-height:32.8px;color:#4d5358;"><span class="ln rs3_0" style="letter-spacing:0.023px;margin-left:-2.10px;">Dispatch New</span><br><span class="ln rs3_1" style="letter-spacing:-0.388px;margin-left:-2.10px;">Event</span></div>
<div class="t date" style="left:2514.00px;top:588.00px;font-size:25.9px;line-height:32.8px;color:#4d5358;"><span class="ln d3_0" style="letter-spacing:1.467px;margin-left:-1.00px;">02/16/2023</span></div>
<div class="t date" style="left:2730.80px;top:588.00px;font-size:25.9px;line-height:32.8px;color:#4d5358;"><span class="ln m3_0" style="letter-spacing:1.506px;margin-left:-1.10px;">07/05/2023</span></div>
<div class="b" style="left:829.00px;top:636.00px;width:2127.80px;height:1.20px;background:#dde1e6;"></div>
<div class="t link" style="left:860.30px;top:638.00px;font-size:25.9px;line-height:32.8px;color:#2c5ef4;"><span class="ln r4_0" style="letter-spacing:-0.132px;margin-left:-0.10px;">Active Directory Parsing DLL Loaded</span><br><span class="ln r4_1" style="letter-spacing:0.262px;margin-left:-0.95px;">Via Office Application</span></div>
<div class="t cell" style="left:1357.75px;top:638.00px;font-size:25.9px;line-height:32.8px;color:#4d5358;"><span class="ln g4_0" style="letter-spacing:0.531px;margin-left:-2.00px;">Endpoint,</span><br><span class="ln g4_1" style="letter-spacing:-0.375px;margin-left:-1.35px;">Turla</span></div>
<div class="t cell" style="left:1545.50px;top:655.00px;font-size:25.9px;line-height:32.8px;color:#4d5358;"><span class="ln c4_0" style="letter-spacing:-0.150px;margin-left:-1.25px;">Custom Rule</span></div>
<div class="t cell" style="left:1759.00px;top:655.00px;font-size:25.9px;line-height:32.8px;color:#4d5358;"><span class="ln ty4_0" style="letter-spacing:-0.438px;margin-left:-2.00px;">Event</span></div>
<div class="t cell" style="left:1909.75px;top:655.00px;font-size:25.9px;line-height:32.8px;color:#4d5358;"><span class="ln o4_0" style="letter-spacing:-0.100px;margin-left:-1.25px;">System</span></div>
<div class="b" style="left:2074.00px;top:655.45px;width:58.00px;height:29.00px;background:#3d8040;border-radius:15px;"></div>
<svg class="b" style="left:2110.70px;top:660.75px" width="18.6" height="18.6" viewBox="0 0 18.6 18.6"><circle cx="9.3" cy="9.3" r="9.3" fill="#fff"/><path d="M4.6 9.6L8 12.9L14 6.6" fill="none" stroke="#3d8040" stroke-width="2.6"/></svg>
<div class="t cell" style="left:2282.30px;top:638.00px;font-size:25.9px;line-height:32.8px;color:#4d5358;"><span class="ln rs4_0" style="letter-spacing:0.023px;margin-left:-2.10px;">Dispatch New</span><br><span class="ln rs4_1" style="letter-spacing:-0.388px;margin-left:-2.10px;">Event</span></div>
<div class="t date" style="left:2514.00px;top:655.00px;font-size:25.9px;line-height:32.8px;color:#4d5358;"><span class="ln d4_0" style="letter-spacing:1.467px;margin-left:-1.00px;">02/16/2023</span></div>
<div class="t date" style="left:2730.80px;top:655.00px;font-size:25.9px;line-height:32.8px;color:#4d5358;"><span class="ln m4_0" style="letter-spacing:1.506px;margin-left:-1.10px;">07/05/2023</span></div>
<div class="b" style="left:829.00px;top:702.00px;width:2127.80px;height:1.20px;background:#dde1e6;"></div>
<div class="t link" style="left:860.30px;top:721.00px;font-size:25.9px;line-height:32.8px;color:#2c5ef4;"><span class="ln r5_0" style="letter-spacing:0.071px;margin-left:-0.10px;">Alternate Data Streams Writing Files</span></div>
<div class="t cell" style="left:1357.75px;top:704.00px;font-size:25.9px;line-height:32.8px;color:#4d5358;"><span class="ln g5_0" style="letter-spacing:0.531px;margin-left:-2.00px;">Endpoint,</span><br><span class="ln g5_1" style="letter-spacing:-0.375px;margin-left:-1.35px;">Turla</span></div>
<div class="t cell" style="left:1545.50px;top:721.00px;font-size:25.9px;line-height:32.8px;color:#4d5358;"><span class="ln c5_0" style="letter-spacing:-0.150px;margin-left:-1.25px;">Custom Rule</span></div>
<div class="t cell" style="left:1759.00px;top:721.00px;font-size:25.9px;line-height:32.8px;color:#4d5358;"><span class="ln ty5_0" style="letter-spacing:-0.438px;margin-left:-2.00px;">Event</span></div>
<div class="t cell" style="left:1909.75px;top:721.00px;font-size:25.9px;line-height:32.8px;color:#4d5358;"><span class="ln o5_0" style="letter-spacing:-0.100px;margin-left:-1.25px;">System</span></div>
<div class="b" style="left:2074.00px;top:721.15px;width:58.00px;height:29.00px;background:#3d8040;border-radius:15px;"></div>
<svg class="b" style="left:2110.70px;top:726.45px" width="18.6" height="18.6" viewBox="0 0 18.6 18.6"><circle cx="9.3" cy="9.3" r="9.3" fill="#fff"/><path d="M4.6 9.6L8 12.9L14 6.6" fill="none" stroke="#3d8040" stroke-width="2.6"/></svg>
<div class="t cell" style="left:2282.30px;top:704.00px;font-size:25.9px;line-height:32.8px;color:#4d5358;"><span class="ln rs5_0" style="letter-spacing:0.023px;margin-left:-2.10px;">Dispatch New</span><br><span class="ln rs5_1" style="letter-spacing:-0.388px;margin-left:-2.10px;">Event</span></div>
<div class="t date" style="left:2514.00px;top:721.00px;font-size:25.9px;line-height:32.8px;color:#4d5358;"><span class="ln d5_0" style="letter-spacing:1.467px;margin-left:-1.00px;">04/04/2023</span></div>
<div class="t date" style="left:2730.80px;top:721.00px;font-size:25.9px;line-height:32.8px;color:#4d5358;"><span class="ln m5_0" style="letter-spacing:1.506px;margin-left:-1.10px;">07/05/2023</span></div>
<div class="b" style="left:829.00px;top:768.00px;width:2127.80px;height:1.20px;background:#dde1e6;"></div>
<div class="t link" style="left:860.30px;top:770.00px;font-size:25.9px;line-height:32.8px;color:#2c5ef4;"><span class="ln r6_0" style="letter-spacing:-0.078px;margin-left:-0.10px;">Attempt to bypass UAC via Windows</span><br><span class="ln r6_1" style="letter-spacing:0.340px;margin-left:-2.10px;">Firewall Snap-In Hijacking</span></div>
<div class="t cell" style="left:1357.75px;top:770.00px;font-size:25.9px;line-height:32.8px;color:#4d5358;"><span class="ln g6_0" style="letter-spacing:0.531px;margin-left:-2.00px;">Endpoint,</span><br><span class="ln g6_1" style="letter-spacing:-0.375px;margin-left:-1.35px;">Turla</span></div>
<div class="t cell" style="left:1545.50px;top:787.00px;font-size:25.9px;line-height:32.8px;color:#4d5358;"><span class="ln c6_0" style="letter-spacing:-0.150px;margin-left:-1.25px;">Custom Rule</span></div>
<div class="t cell" style="left:1759.00px;top:787.00px;font-size:25.9px;line-height:32.8px;color:#4d5358;"><span class="ln ty6_0" style="letter-spacing:-0.438px;margin-left:-2.00px;">Event</span></div>
<div class="t cell" style="left:1909.75px;top:787.00px;font-size:25.9px;line-height:32.8px;color:#4d5358;"><span class="ln o6_0" style="letter-spacing:-0.100px;margin-left:-1.25px;">System</span></div>
<div class="b" style="left:2074.00px;top:787.35px;width:58.00px;height:29.00px;background:#3d8040;border-radius:15px;"></div>
<svg class="b" style="left:2110.70px;top:792.65px" width="18.6" height="18.6" viewBox="0 0 18.6 18.6"><circle cx="9.3" cy="9.3" r="9.3" fill="#fff"/><path d="M4.6 9.6L8 12.9L14 6.6" fill="none" stroke="#3d8040" stroke-width="2.6"/></svg>
<div class="t cell" style="left:2282.30px;top:770.00px;font-size:25.9px;line-height:32.8px;color:#4d5358;"><span class="ln rs6_0" style="letter-spacing:0.023px;margin-left:-2.10px;">Dispatch New</span><br><span class="ln rs6_1" style="letter-spacing:-0.388px;margin-left:-2.10px;">Event</span></div>
<div class="t date" style="left:2514.00px;top:787.00px;font-size:25.9px;line-height:32.8px;color:#4d5358;"><span class="ln d6_0" style="letter-spacing:1.467px;margin-left:-1.00px;">02/22/2023</span></div>
<div class="t date" style="left:2730.80px;top:787.00px;font-size:25.9px;line-height:32.8px;color:#4d5358;"><span class="ln m6_0" style="letter-spacing:1.506px;margin-left:-1.10px;">07/05/2023</span></div>
<div class="b" style="left:829.00px;top:835.00px;width:2127.80px;height:1.20px;background:#dde1e6;"></div>
<div class="t link" style="left:860.30px;top:854.00px;font-size:25.9px;line-height:32.8px;color:#2c5ef4;"><span class="ln r7_0" style="letter-spacing:0.116px;margin-left:-0.10px;">Automated Collection Commands</span></div>
<div class="t cell" style="left:1357.75px;top:837.00px;font-size:25.9px;line-height:32.8px;color:#4d5358;"><span class="ln g7_0" style="letter-spacing:0.531px;margin-left:-2.00px;">Endpoint,</span><br><span class="ln g7_1" style="letter-spacing:-0.375px;margin-left:-1.35px;">Turla</span></div>
<div class="t cell" style="left:1545.50px;top:854.00px;font-size:25.9px;line-height:32.8px;color:#4d5358;"><span class="ln c7_0" style="letter-spacing:-0.150px;margin-left:-1.25px;">Custom Rule</span></div>
<div class="t cell" style="left:1759.00px;top:854.00px;font-size:25.9px;line-height:32.8px;color:#4d5358;"><span class="ln ty7_0" style="letter-spacing:-0.438px;margin-left:-2.00px;">Event</span></div>
<div class="t cell" style="left:1909.75px;top:854.00px;font-size:25.9px;line-height:32.8px;color:#4d5358;"><span class="ln o7_0" style="letter-spacing:-0.100px;margin-left:-1.25px;">System</span></div>
<div class="b" style="left:2074.00px;top:854.35px;width:58.00px;height:29.00px;background:#3d8040;border-radius:15px;"></div>
<svg class="b" style="left:2110.70px;top:859.65px" width="18.6" height="18.6" viewBox="0 0 18.6 18.6"><circle cx="9.3" cy="9.3" r="9.3" fill="#fff"/><path d="M4.6 9.6L8 12.9L14 6.6" fill="none" stroke="#3d8040" stroke-width="2.6"/></svg>
<div class="t cell" style="left:2282.30px;top:837.00px;font-size:25.9px;line-height:32.8px;color:#4d5358;"><span class="ln rs7_0" style="letter-spacing:0.023px;margin-left:-2.10px;">Dispatch New</span><br><span class="ln rs7_1" style="letter-spacing:-0.388px;margin-left:-2.10px;">Event</span></div>
<div class="t date" style="left:2514.00px;top:854.00px;font-size:25.9px;line-height:32.8px;color:#4d5358;"><span class="ln d7_0" style="letter-spacing:1.467px;margin-left:-1.00px;">01/23/2023</span></div>
<div class="t date" style="left:2730.80px;top:854.00px;font-size:25.9px;line-height:32.8px;color:#4d5358;"><span class="ln m7_0" style="letter-spacing:1.506px;margin-left:-1.10px;">07/05/2023</span></div>
<div class="b" style="left:829.00px;top:901.00px;width:2127.80px;height:1.20px;background:#dde1e6;"></div>
<div class="t link" style="left:860.30px;top:903.00px;font-size:25.9px;line-height:32.8px;color:#2c5ef4;"><span class="ln r8_0" style="letter-spacing:0.260px;margin-left:-2.10px;">BB:BehaviorDefinition: Hide</span><br><span class="ln r8_1" style="letter-spacing:0.018px;margin-left:-1.35px;">Schedule Task Via Index Value</span><br><span class="ln r8_2" style="margin-left:-1.20px;">Tamper</span></div>
<div class="t cell" style="left:1357.75px;top:920.00px;font-size:25.9px;line-height:32.8px;color:#4d5358;"><span class="ln g8_0" style="letter-spacing:0.531px;margin-left:-2.00px;">Endpoint,</span><br><span class="ln g8_1" style="letter-spacing:-0.375px;margin-left:-1.35px;">Turla</span></div>
<div class="t cell" style="left:1545.50px;top:936.00px;font-size:25.9px;line-height:32.8px;color:#4d5358;"><span class="ln c8_0" style="letter-spacing:-0.150px;margin-left:-1.25px;">Custom Rule</span></div>
<div class="t cell" style="left:1759.00px;top:936.00px;font-size:25.9px;line-height:32.8px;color:#4d5358;"><span class="ln ty8_0" style="letter-spacing:-0.438px;margin-left:-2.00px;">Event</span></div>
<div class="t cell" style="left:1909.75px;top:936.00px;font-size:25.9px;line-height:32.8px;color:#4d5358;"><span class="ln o8_0" style="letter-spacing:-0.100px;margin-left:-1.25px;">System</span></div>
<div class="b" style="left:2074.00px;top:936.95px;width:58.00px;height:29.00px;background:#3d8040;border-radius:15px;"></div>
<svg class="b" style="left:2110.70px;top:942.25px" width="18.6" height="18.6" viewBox="0 0 18.6 18.6"><circle cx="9.3" cy="9.3" r="9.3" fill="#fff"/><path d="M4.6 9.6L8 12.9L14 6.6" fill="none" stroke="#3d8040" stroke-width="2.6"/></svg>
<div class="t date" style="left:2514.00px;top:936.00px;font-size:25.9px;line-height:32.8px;color:#4d5358;"><span class="ln d8_0" style="letter-spacing:1.467px;margin-left:-1.00px;">02/23/2023</span></div>
<div class="t date" style="left:2730.80px;top:936.00px;font-size:25.9px;line-height:32.8px;color:#4d5358;"><span class="ln m8_0" style="letter-spacing:1.506px;margin-left:-1.10px;">07/05/2023</span></div>
<div class="b" style="left:829.00px;top:1001.00px;width:2127.80px;height:1.20px;background:#dde1e6;"></div>
<div class="t link" style="left:860.30px;top:1003.00px;font-size:25.9px;line-height:32.8px;color:#2c5ef4;"><span class="ln r9_0" style="letter-spacing:0.225px;margin-left:-2.10px;">BB:BehaviorDefinition: Abuse of</span><br><span class="ln r9_1" style="letter-spacing:0.500px;margin-left:-2.10px;">Findstr</span></div>
<div class="t cell" style="left:1357.75px;top:1003.00px;font-size:25.9px;line-height:32.8px;color:#4d5358;"><span class="ln g9_0" style="letter-spacing:0.531px;margin-left:-2.00px;">Endpoint,</span><br><span class="ln g9_1" style="letter-spacing:-0.375px;margin-left:-1.35px;">Turla</span></div>
<div class="t cell" style="left:1545.50px;top:1020.00px;font-size:25.9px;line-height:32.8px;color:#4d5358;"><span class="ln c9_0" style="letter-spacing:-0.150px;margin-left:-1.25px;">Custom Rule</span></div>
<div class="t cell" style="left:1759.00px;top:1020.00px;font-size:25.9px;line-height:32.8px;color:#4d5358;"><span class="ln ty9_0" style="letter-spacing:-0.438px;margin-left:-2.00px;">Event</span></div>
<div class="t cell" style="left:1909.75px;top:1020.00px;font-size:25.9px;line-height:32.8px;color:#4d5358;"><span class="ln o9_0" style="letter-spacing:-0.100px;margin-left:-1.25px;">System</span></div>
<div class="b" style="left:2074.00px;top:1020.15px;width:58.00px;height:29.00px;background:#3d8040;border-radius:15px;"></div>
<svg class="b" style="left:2110.70px;top:1025.45px" width="18.6" height="18.6" viewBox="0 0 18.6 18.6"><circle cx="9.3" cy="9.3" r="9.3" fill="#fff"/><path d="M4.6 9.6L8 12.9L14 6.6" fill="none" stroke="#3d8040" stroke-width="2.6"/></svg>
<div class="t date" style="left:2514.00px;top:1020.00px;font-size:25.9px;line-height:32.8px;color:#4d5358;"><span class="ln d9_0" style="letter-spacing:1.467px;margin-left:-1.00px;">02/22/2023</span></div>
<div class="t date" style="left:2730.80px;top:1020.00px;font-size:25.9px;line-height:32.8px;color:#4d5358;"><span class="ln m9_0" style="letter-spacing:1.506px;margin-left:-1.10px;">07/05/2023</span></div>
<div class="b" style="left:829.00px;top:1067.00px;width:2127.80px;height:1.20px;background:#dde1e6;"></div>
<div class="t link" style="left:860.30px;top:1069.00px;font-size:25.9px;line-height:32.8px;color:#2c5ef4;"><span class="ln r10_0" style="letter-spacing:0.215px;margin-left:-2.10px;">BB:BehaviorDefinition: Abuse of Print</span><br><span class="ln r10_1" style="letter-spacing:0.111px;margin-left:-2.10px;">Executable</span></div>
<div class="t cell" style="left:1357.75px;top:1069.00px;font-size:25.9px;line-height:32.8px;color:#4d5358;"><span class="ln g10_0" style="letter-spacing:0.531px;margin-left:-2.00px;">Endpoint,</span><br><span class="ln g10_1" style="letter-spacing:-0.375px;margin-left:-1.35px;">Turla</span></div>
<div class="t cell" style="left:1545.50px;top:1086.00px;font-size:25.9px;line-height:32.8px;color:#4d5358;"><span class="ln c10_0" style="letter-spacing:-0.150px;margin-left:-1.25px;">Custom Rule</span></div>
<div class="t cell" style="left:1759.00px;top:1086.00px;font-size:25.9px;line-height:32.8px;color:#4d5358;"><span class="ln ty10_0" style="letter-spacing:-0.438px;margin-left:-2.00px;">Event</span></div>
<div class="t cell" style="left:1909.75px;top:1086.00px;font-size:25.9px;line-height:32.8px;color:#4d5358;"><span class="ln o10_0" style="letter-spacing:-0.100px;margin-left:-1.25px;">System</span></div>
<div class="b" style="left:2074.00px;top:1086.45px;width:58.00px;height:29.00px;background:#3d8040;border-radius:15px;"></div>
<svg class="b" style="left:2110.70px;top:1091.75px" width="18.6" height="18.6" viewBox="0 0 18.6 18.6"><circle cx="9.3" cy="9.3" r="9.3" fill="#fff"/><path d="M4.6 9.6L8 12.9L14 6.6" fill="none" stroke="#3d8040" stroke-width="2.6"/></svg>
<div class="t date" style="left:2514.00px;top:1086.00px;font-size:25.9px;line-height:32.8px;color:#4d5358;"><span class="ln d10_0" style="letter-spacing:1.467px;margin-left:-1.00px;">02/22/2023</span></div>
<div class="t date" style="left:2730.80px;top:1086.00px;font-size:25.9px;line-height:32.8px;color:#4d5358;"><span class="ln m10_0" style="letter-spacing:1.506px;margin-left:-1.10px;">07/05/2023</span></div>
<div class="b" style="left:829.00px;top:1133.00px;width:2127.80px;height:1.20px;background:#dde1e6;"></div>
<div class="t link" style="left:860.30px;top:1135.00px;font-size:25.9px;line-height:32.8px;color:#2c5ef4;"><span class="ln r11_0" style="letter-spacing:0.284px;margin-left:-2.10px;">BB:BehaviorDefinition: Account</span><br><span class="ln r11_1" style="letter-spacing:-0.051px;margin-left:-1.20px;">Tampering - Suspicious Failed Logon</span><br><span class="ln r11_2" style="letter-spacing:-0.667px;margin-left:-2.10px;">Reasons</span></div>
<div class="t cell" style="left:1357.75px;top:1152.00px;font-size:25.9px;line-height:32.8px;color:#4d5358;"><span class="ln g11_0" style="letter-spacing:0.531px;margin-left:-2.00px;">Endpoint,</span><br><span class="ln g11_1" style="letter-spacing:-0.375px;margin-left:-1.35px;">Turla</span></div>
<div class="t cell" style="left:1545.50px;top:1168.00px;font-size:25.9px;line-height:32.8px;color:#4d5358;"><span class="ln c11_0" style="letter-spacing:-0.150px;margin-left:-1.25px;">Custom Rule</span></div>
<div class="t cell" style="left:1759.00px;top:1168.00px;font-size:25.9px;line-height:32.8px;color:#4d5358;"><span class="ln ty11_0" style="letter-spacing:-0.438px;margin-left:-2.00px;">Event</span></div>
<div class="t cell" style="left:1909.75px;top:1168.00px;font-size:25.9px;line-height:32.8px;color:#4d5358;"><span class="ln o11_0" style="letter-spacing:-0.100px;margin-left:-1.25px;">System</span></div>
<div class="b" style="left:2074.00px;top:1168.85px;width:58.00px;height:29.00px;background:#3d8040;border-radius:15px;"></div>
<svg class="b" style="left:2110.70px;top:1174.15px" width="18.6" height="18.6" viewBox="0 0 18.6 18.6"><circle cx="9.3" cy="9.3" r="9.3" fill="#fff"/><path d="M4.6 9.6L8 12.9L14 6.6" fill="none" stroke="#3d8040" stroke-width="2.6"/></svg>
<div class="t date" style="left:2514.00px;top:1168.00px;font-size:25.9px;line-height:32.8px;color:#4d5358;"><span class="ln d11_0" style="letter-spacing:1.467px;margin-left:-1.00px;">02/16/2023</span></div>
<div class="t date" style="left:2730.80px;top:1168.00px;font-size:25.9px;line-height:32.8px;color:#4d5358;"><span class="ln m11_0" style="letter-spacing:1.506px;margin-left:-1.10px;">07/05/2023</span></div>
<div class="b" style="left:829.00px;top:1233.00px;width:2127.80px;height:1.20px;background:#dde1e6;"></div>
<div class="t link" style="left:860.30px;top:1235.00px;font-size:25.9px;line-height:32.8px;color:#2c5ef4;"><span class="ln r12_0" style="letter-spacing:0.402px;margin-left:-2.10px;">BB:BehaviorDefinition: Application</span><br><span class="ln r12_1" style="letter-spacing:0.069px;margin-left:-0.95px;">Whitelisting Bypass via Bginfo</span></div>
<div class="t cell" style="left:1357.75px;top:1235.00px;font-size:25.9px;line-height:32.8px;color:#4d5358;"><span class="ln g12_0" style="letter-spacing:0.531px;margin-left:-2.00px;">Endpoint,</span><br><span class="ln g12_1" style="letter-spacing:-0.375px;margin-left:-1.35px;">Turla</span></div>
<div class="t cell" style="left:1545.50px;top:1252.00px;font-size:25.9px;line-height:32.8px;color:#4d5358;"><span class="ln c12_0" style="letter-spacing:-0.150px;margin-left:-1.25px;">Custom Rule</span></div>
<div class="t cell" style="left:1759.00px;top:1252.00px;font-size:25.9px;line-height:32.8px;color:#4d5358;"><span class="ln ty12_0" style="letter-spacing:-0.438px;margin-left:-2.00px;">Event</span></div>
<div class="t cell" style="left:1909.75px;top:1252.00px;font-size:25.9px;line-height:32.8px;color:#4d5358;"><span class="ln o12_0" style="letter-spacing:-0.100px;margin-left:-1.25px;">System</span></div>
<div class="b" style="left:2074.00px;top:1252.15px;width:58.00px;height:29.00px;background:#3d8040;border-radius:15px;"></div>
<svg class="b" style="left:2110.70px;top:1257.45px" width="18.6" height="18.6" viewBox="0 0 18.6 18.6"><circle cx="9.3" cy="9.3" r="9.3" fill="#fff"/><path d="M4.6 9.6L8 12.9L14 6.6" fill="none" stroke="#3d8040" stroke-width="2.6"/></svg>
<div class="t date" style="left:2514.00px;top:1252.00px;font-size:25.9px;line-height:32.8px;color:#4d5358;"><span class="ln d12_0" style="letter-spacing:1.467px;margin-left:-1.00px;">02/22/2023</span></div>
<div class="t date" style="left:2730.80px;top:1252.00px;font-size:25.9px;line-height:32.8px;color:#4d5358;"><span class="ln m12_0" style="letter-spacing:1.506px;margin-left:-1.10px;">07/05/2023</span></div>
<div class="b" style="left:829.00px;top:1299.00px;width:2127.80px;height:1.20px;background:#dde1e6;"></div>
<div class="t link" style="left:860.30px;top:1301.00px;font-size:25.9px;line-height:32.8px;color:#2c5ef4;"><span class="ln r13_0" style="letter-spacing:0.379px;margin-left:-2.10px;">BB:BehaviorDefinition: Arbitrary</span><br><span class="ln r13_1" style="letter-spacing:-0.288px;margin-left:-1.35px;">Command Execution Using WSL</span></div>
<div class="t cell" style="left:1357.75px;top:1301.00px;font-size:25.9px;line-height:32.8px;color:#4d5358;"><span class="ln g13_0" style="letter-spacing:0.531px;margin-left:-2.00px;">Endpoint,</span><br><span class="ln g13_1" style="letter-spacing:-0.375px;margin-left:-1.35px;">Turla</span></div>
<div class="t cell" style="left:1545.50px;top:1318.00px;font-size:25.9px;line-height:32.8px;color:#4d5358;"><span class="ln c13_0" style="letter-spacing:-0.150px;margin-left:-1.25px;">Custom Rule</span></div>
<div class="t cell" style="left:1759.00px;top:1318.00px;font-size:25.9px;line-height:32.8px;color:#4d5358;"><span class="ln ty13_0" style="letter-spacing:-0.438px;margin-left:-2.00px;">Event</span></div>
<div class="t cell" style="left:1909.75px;top:1318.00px;font-size:25.9px;line-height:32.8px;color:#4d5358;"><span class="ln o13_0" style="letter-spacing:-0.100px;margin-left:-1.25px;">System</span></div>
<div class="b" style="left:2074.00px;top:1318.30px;width:58.00px;height:29.00px;background:#3d8040;border-radius:15px;"></div>
<svg class="b" style="left:2110.70px;top:1323.60px" width="18.6" height="18.6" viewBox="0 0 18.6 18.6"><circle cx="9.3" cy="9.3" r="9.3" fill="#fff"/><path d="M4.6 9.6L8 12.9L14 6.6" fill="none" stroke="#3d8040" stroke-width="2.6"/></svg>
<div class="t date" style="left:2514.00px;top:1318.00px;font-size:25.9px;line-height:32.8px;color:#4d5358;"><span class="ln d13_0" style="letter-spacing:1.467px;margin-left:-1.00px;">02/22/2023</span></div>
<div class="t date" style="left:2730.80px;top:1318.00px;font-size:25.9px;line-height:32.8px;color:#4d5358;"><span class="ln m13_0" style="letter-spacing:1.506px;margin-left:-1.10px;">07/05/2023</span></div>
<div class="b" style="left:829.00px;top:1366.00px;width:2127.80px;height:1.20px;background:#dde1e6;"></div>
<div class="t link" style="left:860.30px;top:1368.00px;font-size:25.9px;line-height:32.8px;color:#2c5ef4;"><span class="ln r14_0" style="letter-spacing:0.358px;margin-left:-2.10px;">BB:BehaviorDefinition: Atbroker</span><br><span class="ln r14_1" style="letter-spacing:-0.268px;margin-left:-2.10px;">Registry Change</span></div>
<div class="t cell" style="left:1357.75px;top:1368.00px;font-size:25.9px;line-height:32.8px;color:#4d5358;"><span class="ln g14_0" style="letter-spacing:0.531px;margin-left:-2.00px;">Endpoint,</span><br><span class="ln g14_1" style="letter-spacing:-0.375px;margin-left:-1.35px;">Turla</span></div>
<div class="t cell" style="left:1545.50px;top:1385.00px;font-size:25.9px;line-height:32.8px;color:#4d5358;"><span class="ln c14_0" style="letter-spacing:-0.150px;margin-left:-1.25px;">Custom Rule</span></div>
<div class="t cell" style="left:1759.00px;top:1385.00px;font-size:25.9px;line-height:32.8px;color:#4d5358;"><span class="ln ty14_0" style="letter-spacing:-0.438px;margin-left:-2.00px;">Event</span></div>
<div class="t cell" style="left:1909.75px;top:1385.00px;font-size:25.9px;line-height:32.8px;color:#4d5358;"><span class="ln o14_0" style="letter-spacing:-0.100px;margin-left:-1.25px;">System</span></div>
<div class="b" style="left:2074.00px;top:1385.65px;width:58.00px;height:29.00px;background:#3d8040;border-radius:15px;"></div>
<svg class="b" style="left:2110.70px;top:1390.95px" width="18.6" height="18.6" viewBox="0 0 18.6 18.6"><circle cx="9.3" cy="9.3" r="9.3" fill="#fff"/><path d="M4.6 9.6L8 12.9L14 6.6" fill="none" stroke="#3d8040" stroke-width="2.6"/></svg>
<div class="t date" style="left:2514.00px;top:1385.00px;font-size:25.9px;line-height:32.8px;color:#4d5358;"><span class="ln d14_0" style="letter-spacing:1.467px;margin-left:-1.00px;">02/22/2023</span></div>
<div class="t date" style="left:2730.80px;top:1385.00px;font-size:25.9px;line-height:32.8px;color:#4d5358;"><span class="ln m14_0" style="letter-spacing:1.506px;margin-left:-1.10px;">07/05/2023</span></div>
<div class="b" style="left:829.00px;top:1445.20px;width:2126.00px;height:1.20px;background:#dde1e6;"></div>
<div class="b" style="left:829.00px;top:1446.20px;width:2126.00px;height:56.60px;background:#fff;"></div>
<div class="t ipp" style="left:860.25px;top:1461.00px;font-size:25.9px;line-height:31.08px;color:#2d3136;"><span class="ln ipp_0" style="letter-spacing:0.286px;margin-left:-2.25px;">Items per page:</span></div>
<div class="t n15" style="left:1073.50px;top:1461.00px;font-size:25.9px;line-height:31.08px;color:#161616;"><span class="ln n15_0" style="letter-spacing:-1.000px;margin-left:-2.00px;">15</span></div>
<svg class="b" style="left:1129.41px;top:1461.52px;" width="27.68" height="27.68" viewBox="0 0 32 32" fill="#161616"><path d="M16 22L6 12 7.4 10.6 16 19.2 24.6 10.6 26 12z"/></svg>
<div class="b" style="left:1184.80px;top:1446.20px;width:1.20px;height:56.60px;background:#dde1e6;"></div>
<div class="t range" style="left:1217.25px;top:1461.00px;font-size:25.9px;line-height:31.08px;color:#4d5358;"><span class="ln range_0" style="letter-spacing:0.656px;margin-left:-2.00px;">1-15 of 379 items</span></div>
<div class="b" style="left:2515.00px;top:1446.20px;width:1.20px;height:56.60px;background:#dde1e6;"></div>
<div class="t n1" style="left:2547.00px;top:1461.00px;font-size:25.9px;line-height:31.08px;color:#161616;"><span class="ln n1_0" style="margin-left:-2.00px;">1</span></div>
<svg class="b" style="left:2584.78px;top:1461.27px;" width="28.44" height="28.44" viewBox="0 0 32 32" fill="#161616"><path d="M16 22L6 12 7.4 10.6 16 19.2 24.6 10.6 26 12z"/></svg>
<div class="t pages" style="left:2645.75px;top:1461.00px;font-size:25.9px;line-height:31.08px;color:#4d5358;"><span class="ln pages_0" style="letter-spacing:-0.050px;margin-left:-1.00px;">of 26 pages</span></div>
<div class="b" style="left:2809.00px;top:1446.20px;width:1.20px;height:56.60px;background:#dde1e6;"></div>
<svg class="b" style="left:2840px;top:1468px" width="10.5" height="13.8" viewBox="0 0 10.5 13.8"><path d="M10.5 0V13.8L0 6.9z" fill="#8d95a1"/></svg>
<div class="b" style="left:2882.00px;top:1446.20px;width:1.20px;height:56.60px;background:#dde1e6;"></div>
<svg class="b" style="left:2914.7px;top:1468px" width="10.5" height="13.8" viewBox="0 0 10.5 13.8"><path d="M0 0V13.8L10.5 6.9z" fill="#161616"/></svg>
</div></body></html>
